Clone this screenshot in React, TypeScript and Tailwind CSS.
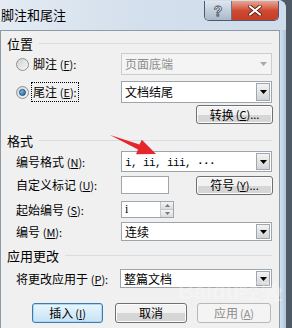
import React from 'react';
import clsx from 'clsx';

// 下拉框的小三角
function Tri({ gray }: { gray?: boolean }) {
  return (
    <svg width="7" height="4" viewBox="0 0 7 4">
      <path d="M0 0h7L3.5 4z" fill={gray ? '#a9a9a9' : '#000'} />
    </svg>
  );
}

function Combo({ children, className, disabled }: { children: React.ReactNode; className?: string; disabled?: boolean }) {
  return (
    <div
      className={clsx(
        'flex items-center w-[151px] border',
        disabled ? 'border-[#c9cdd1] bg-[#f4f4f4] text-[#8c8c8c]' : 'border-[#9ea4ab] bg-white text-black',
        className
      )}
    >
      <span className="flex-1 pl-[3px] leading-none">{children}</span>
      {disabled ? (
        <div className="self-stretch w-[15px] flex items-center justify-center">
          <Tri gray />
        </div>
      ) : (
        <div className="self-stretch my-[1px] mr-[1px] w-[14px] flex items-center justify-center border border-[#9ea6b0] bg-linear-to-b from-[#f3f3f3] to-[#d4d4d4]">
          <Tri />
        </div>
      )}
    </div>
  );
}

function Btn({ children, className, kind }: { children: React.ReactNode; className?: string; kind?: 'default' | 'disabled' }) {
  return (
    <div
      className={clsx(
        'flex items-center justify-center rounded-[3px] border leading-none',
        kind === 'default' && 'border-[#3d7bad] bg-linear-to-b from-[#eaf6fd] to-[#c6e2f4] shadow-[inset_0_0_0_1px_#a8d8f5]',
        kind === 'disabled' && 'border-[#b5b9bc] bg-[#f4f4f4] text-[#8d8d8d]',
        !kind && 'border-[#707070] bg-linear-to-b from-[#f2f2f2] from-50% to-[#d6d6d6] to-50% shadow-[inset_0_0_0_1px_#fcfcfc]',
        className
      )}
    >
      {children}
    </div>
  );
}

function Radio({ on }: { on?: boolean }) {
  return (
    <div className="w-[13px] h-[13px] rounded-full border border-[#8f9294] bg-linear-to-br from-[#d0d2d4] to-[#f6f6f6] flex items-center justify-center">
      {on && <div className="w-[7px] h-[7px] rounded-full border border-[#1a4a72] bg-linear-to-br from-[#7fd0f4] to-[#1d66a3]" />}
    </div>
  );
}

function Heading({ text }: { text: string }) {
  return (
    <div className="flex items-center h-[14px] pl-[6px] pr-[7px]">
      <span className="leading-none text-[13px]">{text}</span>
      <div className="flex-1 ml-[6px] h-px bg-[#d8dde2]" />
    </div>
  );
}

const K = ({ k }: { k: string }) => (
  <span className="text-[11px]">
    (<u>{k}</u>):
  </span>
);

export default function App() {
  return (
    <div className="relative w-[292px] h-[328px] overflow-hidden bg-[#4e5a66] text-[12px] text-black" style={{ fontFamily: '"Noto Sans CJK SC", "Noto Sans", sans-serif' }}>
      <div className="w-[286px] h-full rounded-tr-[8px] bg-[#c6d6e7] flex flex-col">
        {/* 标题栏 */}
        <div className="h-[30px] flex items-start bg-linear-to-r from-[#e4ebf3] via-[#d3dfec] to-[#cfdcea] rounded-tr-[8px]">
          <span className="flex-1 pt-[8px] pl-[1px] text-[13px] leading-none">脚注和尾注</span>
          <div className="mt-[1px] mr-[7px] flex h-[20px] border border-[#50596a] border-t-0 rounded-b-[5px] overflow-hidden">
            <div className="w-[27px] flex items-center justify-center bg-linear-to-b from-[#dfe6ee] to-[#a9b8c9] border-r border-[#6c7686]">
              <span className="text-[14px] font-bold leading-none text-white [-webkit-text-stroke:0.8px_#3d4756]" style={{ fontFamily: '"Liberation Sans", sans-serif' }}>?</span>
            </div>
            <div className="w-[46px] flex items-center justify-center bg-linear-to-b from-[#e9a593] via-[#cf4a33] to-[#c53d24]">
              <svg width="14" height="11" viewBox="0 0 14 11">
                <path d="M2 1.5 L12 9.5 M12 1.5 L2 9.5" stroke="#5a1a10" strokeWidth="3.6" strokeLinecap="round" />
                <path d="M2 1.5 L12 9.5 M12 1.5 L2 9.5" stroke="#fff" strokeWidth="2.2" strokeLinecap="round" />
              </svg>
            </div>
          </div>
        </div>

        {/* 客户区 */}
        <div className="flex-1 flex">
          <div className="w-[280px] bg-[#f0f0f0] border-l border-t border-r border-[#8d9aa8]">
            <div className="mt-[5px]">
              <Heading text="位置" />
            </div>

            <div className="mt-[3px] h-[22px] flex items-center pl-[15px]">
              <div className="w-[105px] flex items-center gap-[4px]">
                <Radio />
                <span className="leading-none">
                  脚注 <K k="F" />
                </span>
              </div>
              <Combo disabled className="h-[22px]">
                页面底端
              </Combo>
            </div>

            <div className="mt-[6px] h-[22px] flex items-center pl-[15px]">
              <div className="w-[105px] flex items-center gap-[2px]">
                <Radio on />
                <span className="leading-none px-[1px] py-[3px] border border-dotted border-black">
                  尾注 <K k="E" />
                </span>
              </div>
              <Combo className="h-[22px]">文档结尾</Combo>
            </div>

            <div className="mt-[2px] flex justify-end pr-[6px]">
              <Btn className="w-[77px] h-[19px]">
                转换 <span className="text-[11px] ml-[2px]">(<u>C</u>)...</span>
              </Btn>
            </div>

            <div className="mt-[9px]">
              <Heading text="格式" />
            </div>

            <div className="mt-[4px] h-[21px] flex items-center pl-[15px]">
              <span className="w-[105px] leading-none">
                编号格式 <K k="N" />
              </span>
              <Combo className="h-[21px]">
                <span className="text-[11px] tracking-[-0.6px]" style={{ fontFamily: '"Liberation Mono", monospace' }}>
                  i, ii, iii, <b>···</b>
                </span>
              </Combo>
            </div>

            <div className="mt-[4px] h-[18px] flex items-center pl-[15px] pr-[6px]">
              <span className="w-[105px] leading-none">
                自定义标记 <K k="U" />
              </span>
              <div className="w-[48px] h-[18px] border border-[#a0a6ad] bg-white" />
              <div className="flex-1" />
              <Btn className="w-[77px] h-[19px]">
                符号 <span className="text-[11px] ml-[2px]">(<u>Y</u>)...</span>
              </Btn>
            </div>

            <div className="mt-[7px] h-[17px] flex items-center pl-[15px]">
              <span className="w-[105px] leading-none">
                起始编号 <K k="S" />
              </span>
              <div className="w-[53px] h-[17px] border border-[#a0a6ad] bg-white flex">
                <span className="flex-1 pl-[3px] leading-[15px] text-[12px]" style={{ fontFamily: '"Liberation Serif", serif' }}>
                  i
                </span>
                <div className="w-[13px] flex flex-col border-l border-[#c4c8cc]">
                  <div className="flex-1 flex items-center justify-center bg-linear-to-b from-[#f5f5f5] to-[#dcdcdc] border-b border-[#c4c8cc]">
                    <svg width="5" height="3" viewBox="0 0 5 3"><path d="M0 3h5L2.5 0z" fill="#6d7a88" /></svg>
                  </div>
                  <div className="flex-1 flex items-center justify-center bg-linear-to-b from-[#f5f5f5] to-[#dcdcdc]">
                    <svg width="5" height="3" viewBox="0 0 5 3"><path d="M0 0h5L2.5 3z" fill="#6d7a88" /></svg>
                  </div>
                </div>
              </div>
            </div>

            <div className="mt-[4px] h-[19px] flex items-center pl-[15px]">
              <span className="w-[105px] leading-none">
                编号 <K k="M" />
              </span>
              <Combo className="h-[19px]">连续</Combo>
            </div>

            <div className="mt-[7px]">
              <Heading text="应用更改" />
            </div>

            <div className="mt-[7px] h-[19px] flex items-center pl-[15px]">
              <span className="w-[104px] leading-none">
                将更改应用于 <K k="P" />
              </span>
              <Combo className="h-[19px] w-[152px]">整篇文档</Combo>
            </div>

            <div className="mt-[15px] flex pl-[31px]">
              <Btn kind="default" className="w-[71px] h-[20px]">
                插入 <span className="text-[11px] ml-[2px]">(<u>I</u>)</span>
              </Btn>
              <Btn className="ml-[12px] w-[72px] h-[20px]">取消</Btn>
              <Btn kind="disabled" className="ml-[10px] w-[74px] h-[20px]">
                应用 <span className="text-[11px] ml-[2px]">(<u>A</u>)</span>
              </Btn>
            </div>
          </div>
          <div className="w-[6px] bg-linear-to-r from-[#d3e0ee] to-[#aec3d8]" />
        </div>
      </div>

      {/* 百度经验水印 */}
      <div className="absolute left-[178px] top-[281px] text-[22px] font-bold leading-none text-white/30 pointer-events-none" style={{ fontFamily: '"Liberation Sans", sans-serif' }}>
        Baidu经验
      </div>

      {/* 红色箭头标注 */}
      <svg className="absolute left-0 top-0 pointer-events-none" width="292" height="328" viewBox="0 0 292 328">
        <polygon points="110,135 139.5,144.6 141.8,139.8 156,154 136,154.2 138,149.6" fill="#e5262b" />
      </svg>
    </div>
  );
}
